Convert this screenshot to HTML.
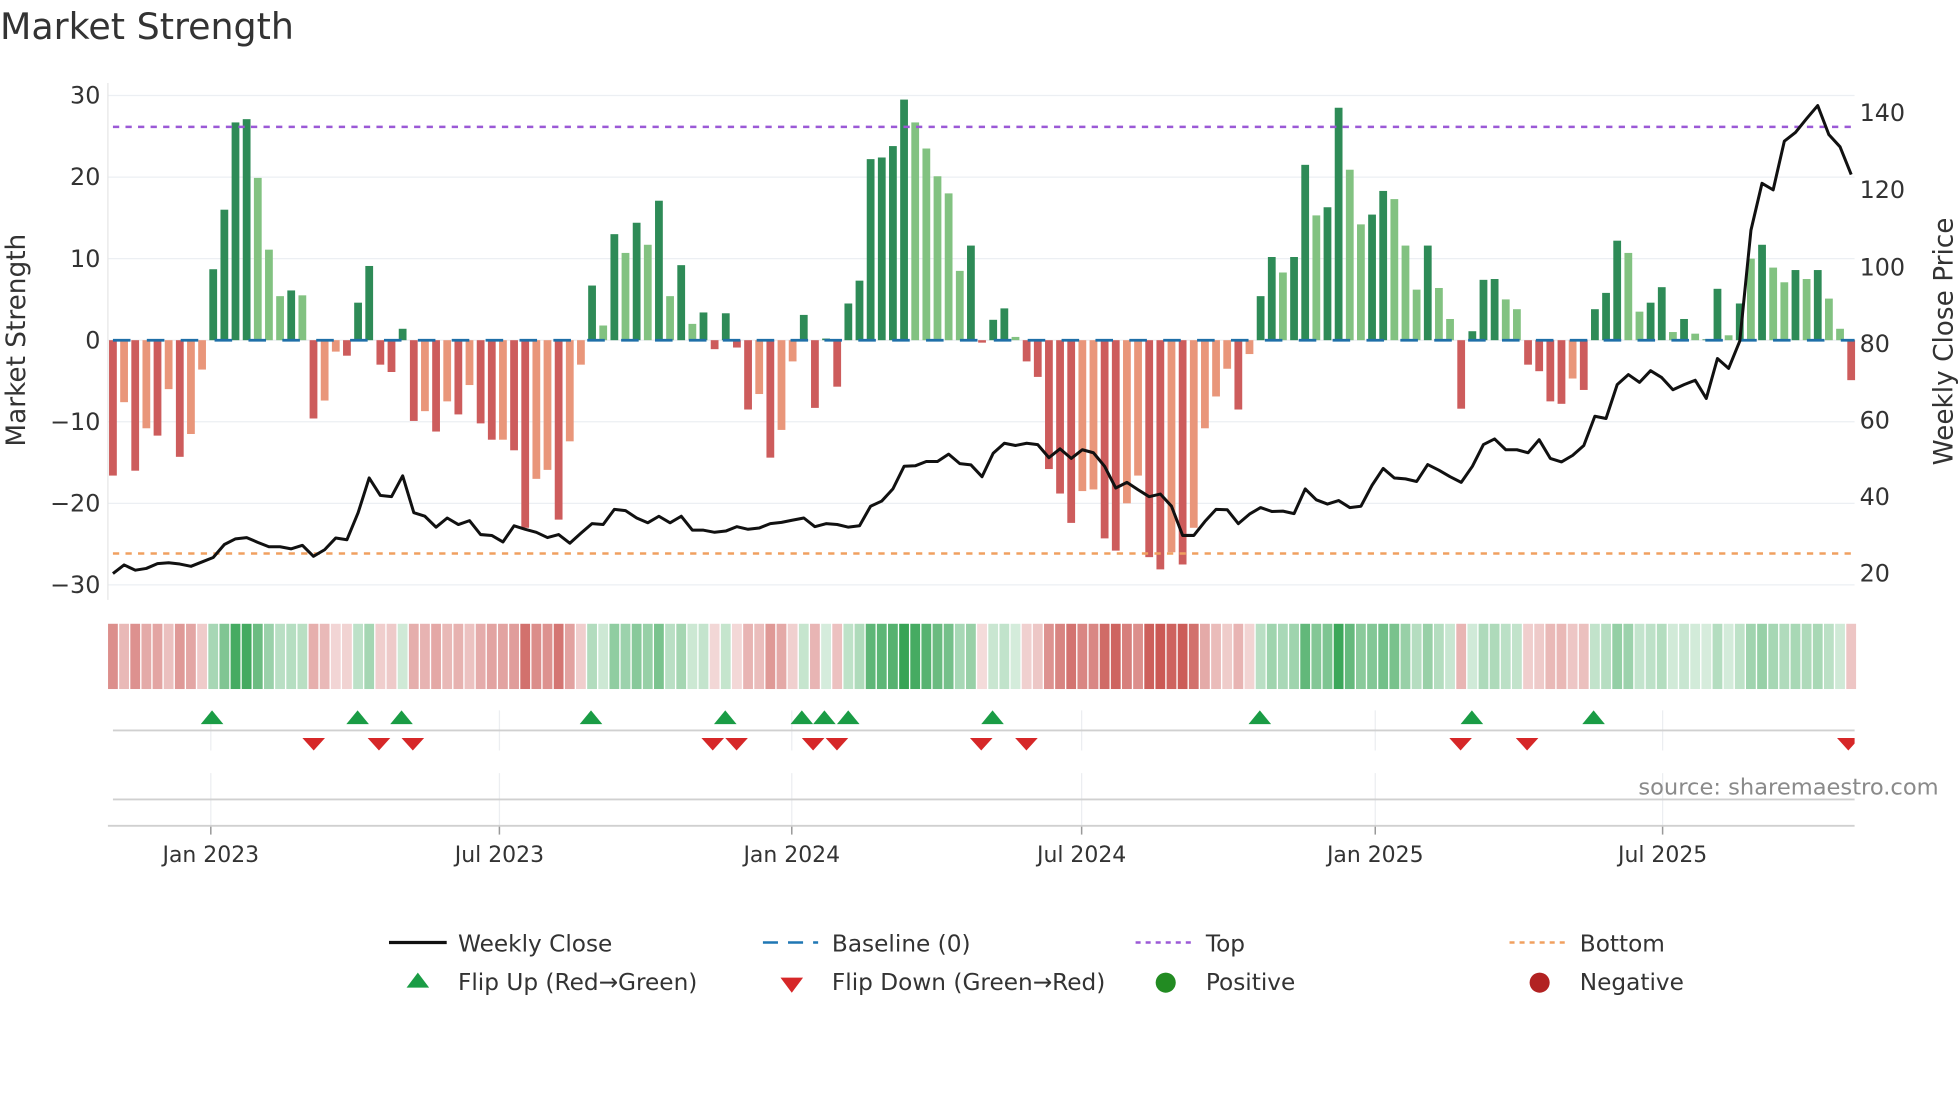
<!DOCTYPE html>
<html><head><meta charset="utf-8"><style>
html,body{margin:0;padding:0;background:#fff;}
svg{display:block;}
text{font-family:"DejaVu Sans","Liberation Sans",sans-serif;}
</style></head><body>
<svg id="s" width="1960" height="1102" viewBox="0 0 1562 878" xmlns="http://www.w3.org/2000/svg">
<rect width="1562" height="878" fill="#fff"/>
<text x="0" y="31" font-size="29" fill="#333">Market Strength</text>
<g id="grid"></g>
<g id="bars"></g>
<g id="heat"></g>
<g id="tri"></g>
<g id="labels" font-size="17.5" fill="#333"></g>
<text x="0" y="0" font-size="21" fill="#333" text-anchor="middle" transform="translate(20,271) rotate(-90)">Market Strength</text>
<text x="0" y="0" font-size="21" fill="#333" text-anchor="middle" transform="translate(1556,272) rotate(-90)">Weekly Close Price</text>
<text x="1545" y="633" font-size="18" fill="#8a8a8a" text-anchor="end">source: sharemaestro.com</text>
<g font-size="18.5" fill="#333">
<line x1="310" y1="751" x2="356" y2="751" stroke="#111" stroke-width="2.5"/>
<text x="365" y="758">Weekly Close</text>
<line x1="608" y1="751" x2="652" y2="751" stroke="#1f77b4" stroke-width="2" stroke-dasharray="12 8"/>
<text x="663" y="758">Baseline (0)</text>
<line x1="905" y1="751" x2="950" y2="751" stroke="#9b59d6" stroke-width="2" stroke-dasharray="4 4"/>
<text x="961" y="758">Top</text>
<line x1="1203" y1="751" x2="1248" y2="751" stroke="#f0a060" stroke-width="2" stroke-dasharray="4 4"/>
<text x="1259" y="758">Bottom</text>
<polygon points="333,775 324,787 342,787" fill="#1a9c45"/>
<text x="365" y="789">Flip Up (Red→Green)</text>
<polygon points="622,779 640,779 631,791" fill="#d62728"/>
<text x="663" y="789">Flip Down (Green→Red)</text>
<circle cx="929" cy="783" r="8" fill="#228b22"/>
<text x="961" y="789">Positive</text>
<circle cx="1227" cy="783" r="8" fill="#b22222"/>
<text x="1259" y="789">Negative</text>
</g>
</svg>
<script>
var NS="http://www.w3.org/2000/svg";
function el(p,t,a,txt){var e=document.createElementNS(NS,t);for(var k in a)e.setAttribute(k,a[k]);if(txt!=null)e.textContent=txt;document.getElementById(p).appendChild(e);return e;}
var V=[[-16.6,1],[-7.6,0],[-16,1],[-10.8,0],[-11.7,1],[-6,0],[-14.3,1],[-11.5,0],[-3.6,0],
[8.7,1],[16,1],[26.7,1],[27.1,1],[19.9,0],[11.1,0],[5.4,0],[6.1,1],[5.5,0],
[-9.6,1],[-7.4,0],[-1.4,0],[-1.9,1],[4.6,1],[9.1,1],[-3,1],[-3.9,1],[1.4,1],
[-9.9,1],[-8.7,0],[-11.2,1],[-7.5,0],[-9.1,1],[-5.5,0],[-10.2,1],[-12.2,1],[-12.2,0],[-13.5,1],[-23,1],[-17,0],[-15.9,0],[-22,1],
[-12.4,0],[-3,0],[6.7,1],[1.8,0],[13,1],[10.7,0],[14.4,1],[11.7,0],[17.1,1],[5.4,0],[9.2,1],[2,0],[3.4,1],
[-1.1,1],[3.3,1],[-0.9,1],[-8.5,1],[-6.6,0],[-14.4,1],[-11,0],[-2.6,0],[3.1,1],[-8.3,1],[0.2,1],[-5.7,1],
[4.5,1],[7.3,1],[22.2,1],[22.4,1],[23.8,1],[29.5,1],[26.7,0],[23.5,0],[20.1,0],[18,0],[8.5,0],[11.6,1],[-0.3,1],[2.5,1],[3.9,1],
[0.4,0],[-2.6,1],[-4.5,1],[-15.8,1],[-18.8,1],[-22.4,1],[-18.5,0],[-18.3,0],[-24.3,1],[-25.8,1],[-20,0],[-16.6,0],[-26.6,1],[-28.1,1],[-26,0],[-27.5,1],[-23,0],[-10.8,0],[-6.9,0],[-3.5,0],[-8.5,1],[-1.7,0],
[5.4,1],[10.2,1],[8.3,0],[10.2,1],[21.5,1],[15.3,0],[16.3,1],[28.5,1],[20.9,0],[14.2,0],[15.4,1],[18.3,1],[17.3,0],[11.6,0],[6.2,0],[11.6,1],[6.4,0],
[2.6,0],[-8.4,1],[1.1,1],[7.4,1],[7.5,1],[5,0],[3.8,0],[-3,1],[-3.8,1],[-7.5,1],[-7.8,1],[-4.7,0],[-6.1,1],
[3.8,1],[5.8,1],[12.2,1],[10.7,0],[3.5,0],[4.6,1],[6.5,1],[1,0],[2.6,1],[0.8,0],[0.1,1],[6.3,1],[0.6,0],[4.5,1],[10,0],[11.7,1],[8.9,0],[7.1,0],[8.6,1],[7.5,0],[8.6,1],[5.1,0],[1.4,0],[-4.9,1]];
var P=[1135,1115,1127,1123,1112,1110,1113,1118,1108,1098,1068,1055,1052,1063,1073,1073,1078,1070,1095,1080,1053,1057,995,915,955,958,910,995,1003,1028,1007,1022,1013,1045,1047,1062,1025,1033,1040,1052,1045,
1065,1042,1020,1022,987,990,1007,1018,1003,1018,1003,1035,1035,1040,1037,1027,1033,1030,1020,1017,1012,1007,1027,1020,1022,1028,1025,980,968,940,888,887,877,877,860,882,885,912,858,835,
840,835,838,868,848,870,850,857,888,938,925,942,958,952,980,1047,1047,1015,987,988,1020,998,983,992,991,997,940,965,975,967,983,980,932,893,915,917,923,884,897,
912,925,888,838,825,850,850,857,827,870,878,863,840,773,778,700,677,695,668,684,712,700,690,732,640,663,600,345,237,252,140,120,88,58,125,153,217];
function X(i){return 90+i*8.88;}
function Y(v){return 271-v*6.5;}
[30,20,10,0,-10,-20,-30].forEach(function(v){el("grid","line",{x1:86,x2:1478,y1:Y(v),y2:Y(v),stroke:"#eceff3","stroke-width":1});
 el("labels","text",{x:80,y:Y(v)+6.5,"text-anchor":"end","font-size":19},(v<0?"\u2212"+(-v):v));});
[[140,90],[120,151],[100,213],[80,274],[60,335],[40,396],[20,457]].forEach(function(a){el("labels","text",{x:1482,y:a[1]+6.5,"font-size":19},a[0]);});
el("grid","line",{x1:86,x2:86,y1:66,y2:478,stroke:"#e6e6e6","stroke-width":1});
var months=[168,398,631,862,1096,1325],ml=["Jan 2023","Jul 2023","Jan 2024","Jul 2024","Jan 2025","Jul 2025"];
months.forEach(function(x,k){
 el("grid","line",{x1:x,x2:x,y1:566,y2:598,stroke:"#eceef1","stroke-width":1});
 el("grid","line",{x1:x,x2:x,y1:616,y2:658,stroke:"#eceef1","stroke-width":1});
 el("grid","line",{x1:x,x2:x,y1:658,y2:665,stroke:"#999","stroke-width":1.2});
 el("labels","text",{x:x,y:687,"text-anchor":"middle"},ml[k]);
});
el("grid","line",{x1:90,x2:1478,y1:582,y2:582,stroke:"#d0d0d0","stroke-width":1.5});
el("grid","line",{x1:90,x2:1478,y1:637,y2:637,stroke:"#d0d0d0","stroke-width":1.5});
el("grid","line",{x1:86,x2:1478,y1:658,y2:658,stroke:"#d0d0d0","stroke-width":1.5});
V.forEach(function(b,i){var v=b[0],d=b[1],c;
 if(v>=0)c=d?"#2e8b57":"#82c281";else c=d?"#cd5c5c":"#e9967a";
 var y=v>=0?Y(v):271,h=Math.abs(v)*6.5;
 el("bars","rect",{x:X(i)-3.1,y:y,width:6.2,height:Math.max(h,0.6),fill:c});
 var t=Math.min(Math.abs(v)/30,1),a=0.2+0.8*t,base=v>=0?[52,163,83]:[200,80,76];
 var col="rgb("+base.map(function(q){return Math.round(255+(q-255)*a);}).join(",")+")";
 el("heat","rect",{x:X(i)-3.9,y:497,width:7.8,height:52,fill:col});
});
el("bars","line",{x1:90,x2:1478,y1:271,y2:271,stroke:"#1f6fa8","stroke-width":2.2,"stroke-dasharray":"14 13"});
el("bars","line",{x1:90,x2:1478,y1:101,y2:101,stroke:"#9b59d6","stroke-width":2,"stroke-dasharray":"5 5"});
el("bars","line",{x1:90,x2:1478,y1:441,y2:441,stroke:"#f0a060","stroke-width":2,"stroke-dasharray":"5 5"});
var pts=P.map(function(z,i){return X(i).toFixed(1)+","+(76+(z-35)*0.3464).toFixed(1);}).join(" ");
el("bars","polyline",{points:pts,fill:"none",stroke:"#111","stroke-width":2.4,"stroke-linejoin":"round"});
[169,285,320,471,578,639,657,676,791,1004,1173,1270].forEach(function(x){el("tri","polygon",{points:(x)+",566 "+(x-9)+",577 "+(x+9)+",577",fill:"#1a9c45"});});
[250,302,329,568,587,648,667,782,818,1164,1217,1473].forEach(function(x){el("tri","polygon",{points:(x-9)+",588 "+(x+9)+",588 "+x+",598",fill:"#d62728"});});
el("tri","rect",{x:1478,y:585,width:10,height:15,fill:"#fff"});
</script>
</body></html>
